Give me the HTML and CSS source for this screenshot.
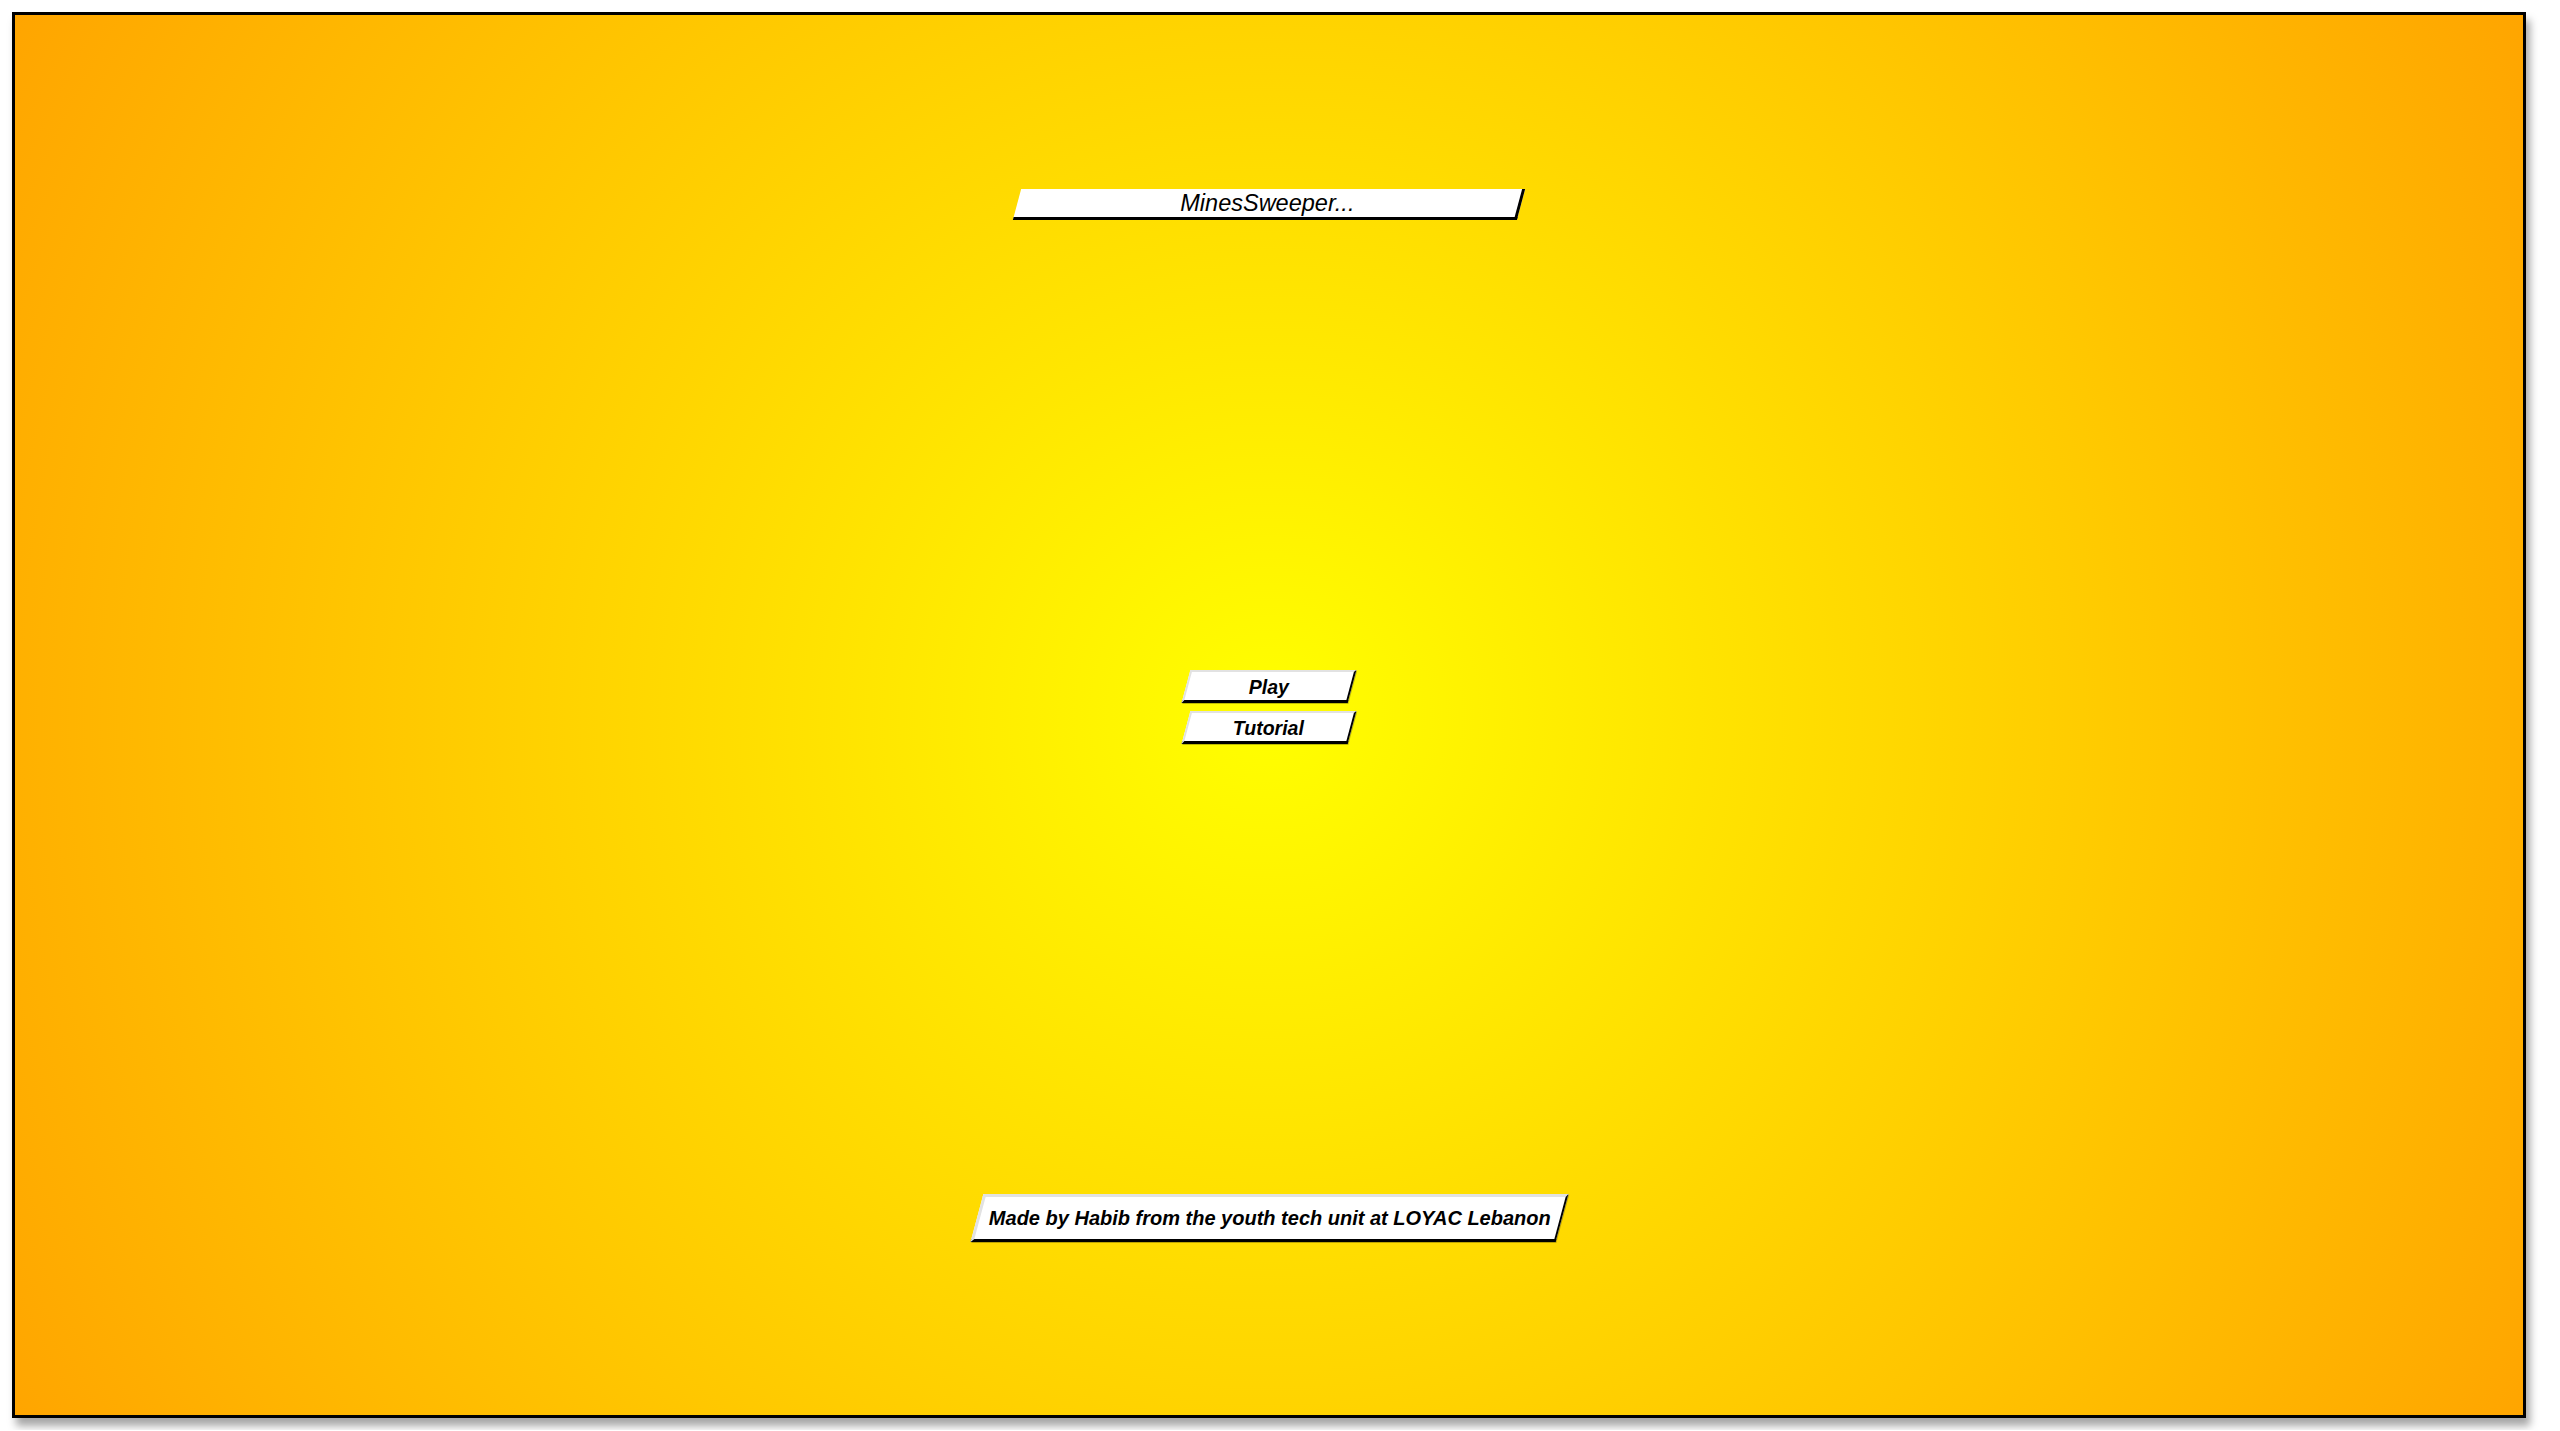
FILE: index.html
```html
<!DOCTYPE html>
<html>
<head>
<meta charset="utf-8">
<title>MinesSweeper</title>
<link rel="stylesheet" href="styles.css">
</head>
<body>
<div class="frame">
  <div class="title"><span class="unskew">MinesSweeper...</span></div>
  <div class="menu">
    <div class="btn"><span class="unskew">Play</span></div>
    <div class="btn"><span class="unskew">Tutorial</span></div>
  </div>
  <div class="footer"><span class="unskew">Made by Habib from the youth tech unit at LOYAC Lebanon</span></div>
</div>
</body>
</html>
```

FILE: styles.css
```css
html, body {
  margin: 0;
  padding: 0;
  background: #fff;
}
body {
  padding: 12px;
  font-family: "Liberation Sans", Arial, sans-serif;
}
.frame {
  box-sizing: border-box;
  width: 2514px;
  height: 1406px;
  border: 3px solid #000;
  background: radial-gradient(circle, #ffff00, #ffa500);
  box-shadow: 4px 8px 8px rgba(0, 0, 0, 0.35);
  display: flex;
  flex-direction: column;
  align-items: center;
  padding-top: 174px;
}
.title {
  box-sizing: border-box;
  width: 504px;
  height: 31px;
  padding-top: 1px;
  background: #fff;
  border-right: 3px solid #000;
  border-bottom: 3px solid #000;
  transform: skewX(-15deg);
  display: flex;
  align-items: center;
  justify-content: center;
  font-size: 23.5px;
  color: #000;
}
.unskew {
  display: inline-block;
  transform: skewX(15deg);
  font-style: italic;
}
.menu {
  margin-top: 450px;
  display: flex;
  flex-direction: column;
  gap: 8px;
}
.btn {
  box-sizing: border-box;
  width: 166px;
  height: 33px;
  padding-top: 2px;
  background: #fff;
  border-top: 2px solid #e2e2e2;
  border-left: 2px solid #e2e2e2;
  border-right: 2px solid #000;
  border-bottom: 3px solid #000;
  box-shadow: 1px 1px 0 rgba(0, 0, 0, 0.25);
  transform: skewX(-15deg);
  display: flex;
  align-items: center;
  justify-content: center;
  font-size: 19.5px;
  font-weight: bold;
  color: #000;
}
.footer {
  box-sizing: border-box;
  margin-top: 450px;
  width: 585px;
  height: 48px;
  padding: 0 12px;
  background: #fff;
  border-top: 3px solid #e2e2e2;
  border-left: 3px solid #e2e2e2;
  border-right: 2px solid #000;
  border-bottom: 3px solid #000;
  box-shadow: 1px 1px 0 rgba(0, 0, 0, 0.25);
  transform: skewX(-15deg);
  display: flex;
  align-items: center;
  justify-content: center;
  font-size: 20px;
  font-weight: bold;
  color: #000;
  white-space: nowrap;
}
```
